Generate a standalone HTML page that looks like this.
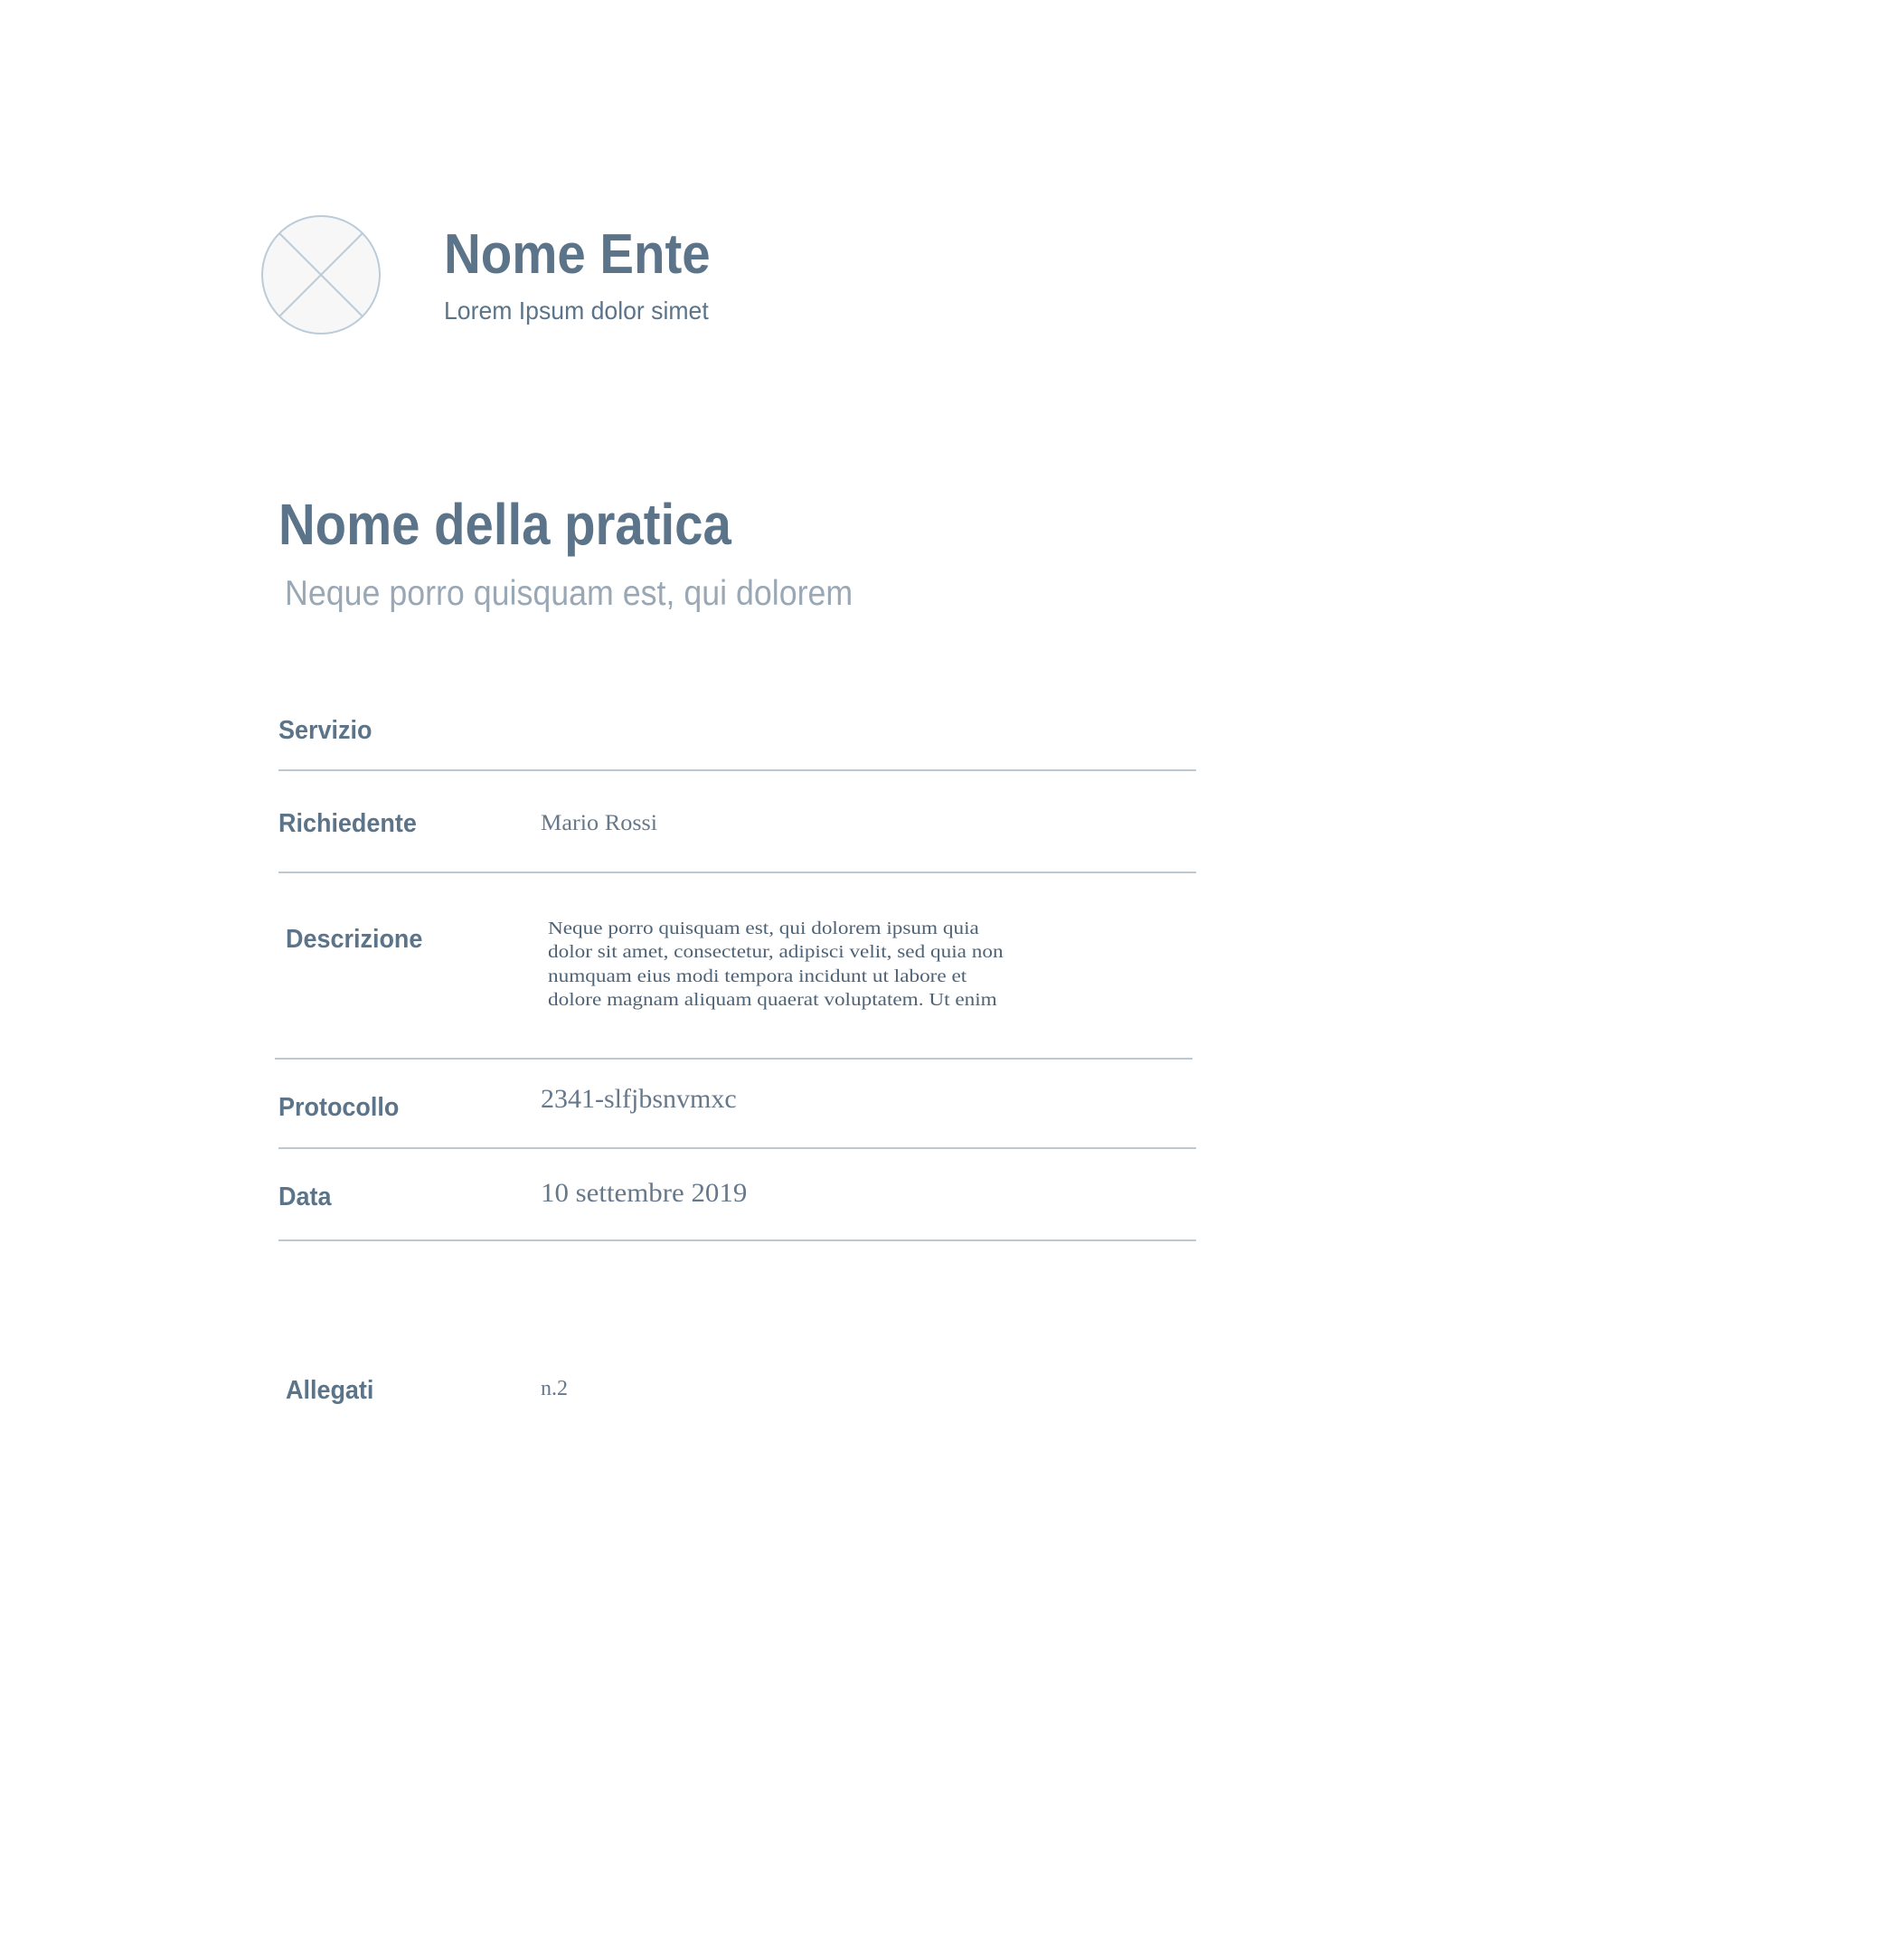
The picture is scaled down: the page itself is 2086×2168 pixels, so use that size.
<!DOCTYPE html>
<html><head><meta charset="utf-8"><style>
html,body{margin:0;padding:0;background:#fff;width:2086px;height:2168px;overflow:hidden}
body{position:relative;font-family:"Liberation Sans",sans-serif}
.t{position:absolute;white-space:nowrap;line-height:1;transform-origin:0 0}
.lab{font-weight:bold;font-size:29px;color:#5b7489;transform:scaleX(0.93)}
.val{font-family:"Liberation Serif",serif;color:#66788a}
.hr{position:absolute;height:2px;background:#bcc8d2}
</style></head><body>
<svg style="position:absolute;left:288px;top:237px" width="134" height="134" viewBox="0 0 134 134">
<circle cx="67" cy="67" r="65" fill="#f7f7f7" stroke="#bccbd8" stroke-width="2"/>
<line x1="21" y1="21" x2="113" y2="113" stroke="#bccbd8" stroke-width="2"/>
<line x1="113" y1="21" x2="21" y2="113" stroke="#bccbd8" stroke-width="2"/>
</svg>
<div class="t" style="left:491px;top:251px;font-size:62px;font-weight:bold;color:#5b7489;transform:scaleX(0.91)">Nome Ente</div>
<div class="t" style="left:491px;top:330px;font-size:28px;color:#5b7489;transform:scaleX(0.95)">Lorem Ipsum dolor simet</div>
<div class="t" style="left:308px;top:548px;font-size:64px;font-weight:bold;color:#5b7489;transform:scaleX(0.88)">Nome della pratica</div>
<div class="t" style="left:315px;top:637px;font-size:39px;color:#9aa8b6;transform:scaleX(0.917)">Neque porro quisquam est, qui dolorem</div>

<div class="t lab" style="left:308px;top:794px">Servizio</div>
<div class="hr" style="left:308px;top:851px;width:1015px"></div>
<div class="t lab" style="left:308px;top:897px">Richiedente</div>
<div class="t val" style="left:598px;top:898px;font-size:25px;transform:scaleX(1.05)">Mario Rossi</div>
<div class="hr" style="left:308px;top:964px;width:1015px"></div>
<div class="t lab" style="left:316px;top:1025px">Descrizione</div>
<div class="t val" style="left:606px;top:1014px;font-size:20px;line-height:26.4px;color:#4e6276;transform:scaleX(1.16)">Neque porro quisquam est, qui dolorem ipsum quia<br>dolor sit amet, consectetur, adipisci velit, sed quia non<br>numquam eius modi tempora incidunt ut labore et<br>dolore magnam aliquam quaerat voluptatem. Ut enim</div>
<div class="hr" style="left:304px;top:1170px;width:1015px"></div>
<div class="t lab" style="left:308px;top:1211px">Protocollo</div>
<div class="t val" style="left:598px;top:1201px;font-size:30px">2341-slfjbsnvmxc</div>
<div class="hr" style="left:308px;top:1269px;width:1015px"></div>
<div class="t lab" style="left:308px;top:1310px">Data</div>
<div class="t val" style="left:598px;top:1305px;font-size:30px;transform:scaleX(1.03)">10 settembre 2019</div>
<div class="hr" style="left:308px;top:1371px;width:1015px"></div>
<div class="t lab" style="left:316px;top:1524px">Allegati</div>
<div class="t val" style="left:598px;top:1524px;font-size:24px">n.2</div>
</body></html>
